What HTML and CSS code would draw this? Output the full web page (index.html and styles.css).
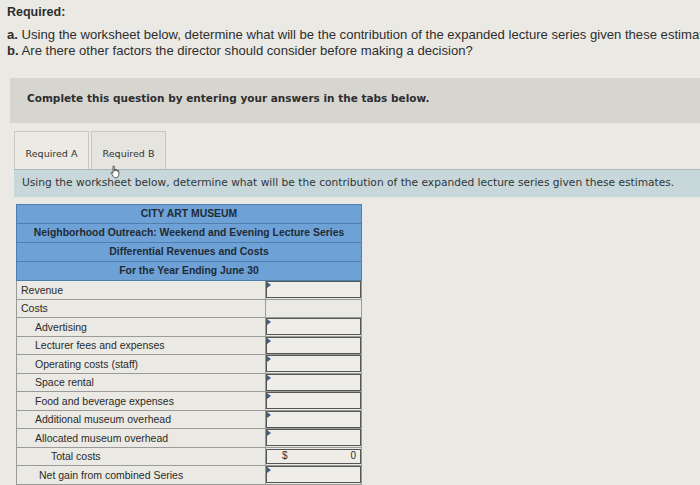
FILE: index.html
```html
<!DOCTYPE html>
<html>
<head>
<meta charset="utf-8">
<link rel="stylesheet" href="styles.css">
</head>
<body>
<div class="page">
  <p class="req">Required:</p>
  <div class="parts">
    <p class="part"><b>a.</b> Using the worksheet below, determine what will be the contribution of the expanded lecture series given these estimates.</p>
    <p class="part"><b>b.</b> Are there other factors the director should consider before making a decision?</p>
  </div>
  <div class="instr">Complete this question by entering your answers in the tabs below.</div>
  <div class="tabs">
    <div class="tab">Required A</div>
    <div class="tab">Required B
      <svg class="cursor" width="14" height="14" viewBox="0 0 14 14"><path d="M4 1.5c0-.8 1.3-.8 1.3 0V6h.2V4.8c0-.8 1.3-.8 1.3 0V6h.2V5.3c0-.8 1.3-.8 1.3 0V6.3h.2V6c0-.8 1.3-.8 1.3 0v3.5c0 2-1.2 3.3-3 3.3H6.6c-1.2 0-1.8-.6-2.4-1.5L2.2 8.3c-.4-.6.3-1.3.9-.8L4 8.4z" fill="#fff" stroke="#333" stroke-width=".8"/></svg>
    </div>
  </div>
  <div class="prompt">Using the worksheet below, determine what will be the contribution of the expanded lecture series given these estimates.</div>
  <table class="ws">
    <colgroup><col class="c1"><col class="c2"></colgroup>
    <tr class="hd"><td colspan="2">CITY ART MUSEUM</td></tr>
    <tr class="hd"><td colspan="2">Neighborhood Outreach: Weekend and Evening Lecture Series</td></tr>
    <tr class="hd"><td colspan="2">Differential Revenues and Costs</td></tr>
    <tr class="hd"><td colspan="2">For the Year Ending June 30</td></tr>
    <tr class="row"><td class="lbl">Revenue</td><td class="val"><div class="box mark"></div></td></tr>
    <tr class="row"><td class="lbl">Costs</td><td class="val"></td></tr>
    <tr class="row"><td class="lbl ind">Advertising</td><td class="val"><div class="box mark"></div></td></tr>
    <tr class="row"><td class="lbl ind">Lecturer fees and expenses</td><td class="val"><div class="box mark"></div></td></tr>
    <tr class="row"><td class="lbl ind">Operating costs (staff)</td><td class="val"><div class="box mark"></div></td></tr>
    <tr class="row"><td class="lbl ind">Space rental</td><td class="val"><div class="box mark"></div></td></tr>
    <tr class="row"><td class="lbl ind">Food and beverage expenses</td><td class="val"><div class="box mark"></div></td></tr>
    <tr class="row"><td class="lbl ind">Additional museum overhead</td><td class="val"><div class="box mark"></div></td></tr>
    <tr class="row"><td class="lbl ind">Allocated museum overhead</td><td class="val"><div class="box mark"></div></td></tr>
    <tr class="row"><td class="lbl ind2">Total costs</td><td class="val"><div class="box total"><span>$</span><span>0</span></div></td></tr>
    <tr class="row"><td class="lbl ind1">Net gain from combined Series</td><td class="val"><div class="box mark"></div></td></tr>
  </table>
</div>
</body>
</html>
```
FILE: styles.css
```css
html, body {
  margin: 0;
  padding: 0;
  background: #ebe9e4;
  overflow: hidden;
}
.page {
  width: 700px;
  height: 485px;
  overflow: hidden;
  color: #2e2e2e;
  font-family: "Liberation Sans", Arial, sans-serif;
}
.req {
  margin: 0;
  padding: 5px 0 0 7px;
  font-size: 12.5px;
  font-weight: bold;
  line-height: 15px;
}
.parts {
  margin-top: 7px;
  padding-left: 7px;
}
.part {
  margin: 0;
  font-size: 13.1px;
  line-height: 16px;
  white-space: nowrap;
}
.instr {
  margin: 19px 0 0 10px;
  width: 720px;
  height: 45px;
  box-sizing: border-box;
  padding: 13px 0 0 17px;
  background: #d6d5d0;
  font-family: "DejaVu Sans", Verdana, sans-serif;
  font-weight: bold;
  font-size: 10.5px;
  line-height: 14px;
}
.tabs {
  display: flex;
  gap: 2px;
  margin: 8px 0 0 14px;
  height: 38px;
}
.tab {
  position: relative;
  width: 75px;
  box-sizing: border-box;
  border: 1px solid #c8c6c0;
  border-bottom: none;
  background: #eceae5;
  font-family: "DejaVu Sans", Verdana, sans-serif;
  font-size: 9.5px;
  display: flex;
  align-items: center;
  justify-content: center;
  padding-top: 5px;
  color: #333;
}
.tab + .tab {
  background: #e6e4de;
}
.cursor {
  position: absolute;
  left: 17px;
  top: 33px;
}
.prompt {
  margin-left: 14px;
  width: 700px;
  height: 28px;
  box-sizing: border-box;
  padding: 6px 0 0 8px;
  background: #c7d7da;
  border-top: 1px solid #a9b9bc;
  font-family: "DejaVu Sans", Verdana, sans-serif;
  font-size: 10.65px;
  line-height: 14px;
  white-space: nowrap;
  color: #2f3538;
}
.ws {
  margin: 7px 0 0 16px;
  border-collapse: collapse;
  width: 345px;
  font-size: 10.5px;
  table-layout: fixed;
}
.c1 { width: 249px; }
.c2 { width: 96px; }
.ws td {
  padding: 0;
  border: 1px solid #9a9a98;
  line-height: 12px;
}
.hd { height: 19px; }
.hd td {
  background: #6ea2d6;
  text-align: center;
  font-weight: bold;
  font-size: 10.4px;
  color: #1f2a35;
  border-color: #4f7fae;
}
.row { height: 18.5px; }
.lbl {
  padding-left: 4px !important;
  background: #ebe9e3;
  color: #2a2a2a;
}
.ind { padding-left: 18px !important; }
.ind1 { padding-left: 22px !important; }
.ind2 { padding-left: 34px !important; }
.val {
  background: #ebe9e3;
}
.box {
  position: relative;
  height: 15px;
  border: 1px solid #555;
  background: #efede8;
}
.mark::before {
  content: "";
  position: absolute;
  left: 0;
  top: 0;
  border-top: 3px solid transparent;
  border-bottom: 3px solid transparent;
  border-left: 4px solid #3a5f8f;
}
.total {
  display: flex;
  justify-content: space-between;
  align-items: center;
  padding: 0 4px 0 15px;
  box-sizing: border-box;
  font-size: 10px;
}
```
